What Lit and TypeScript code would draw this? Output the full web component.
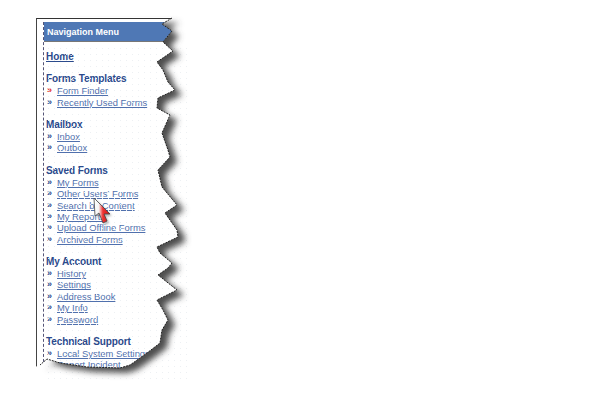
import { LitElement, html, css, svg } from "lit";
import { customElement } from "lit/decorators.js";

const EDGE = "M172 18 L162 24 L172 31 L163 42 L173 51 L157 62 L163 70 L168 82 L175 90 L158 98 L157 108 L170 115 L162 133 L168 150 L170 157 L158 170 L162 187 L177 205 L165 213 L177 230 L178 237 L157 247 L160 253 L172 263 L168 268 L158 275 L177 290 L157 300 L163 310 L168 320 L162 330 L160 343 L147 353 L140 358 L130 365 L120 368 L87 367 L60 363 L47 359 L40 365";
const INNER = EDGE + " L35 367 L35 17 L172 17 Z";
const SHADOW = EDGE + " L62 340 L62 18 Z";
const ARROW = "M94 198 L95 216 L99 213 L103 223 L107 221 L104 214 L110 214 Z";

const SECTIONS: { title: string; items: string[] }[] = [
  { title: "Forms Templates", items: ["Form Finder", "Recently Used Forms"] },
  { title: "Mailbox", items: ["Inbox", "Outbox"] },
  { title: "Saved Forms", items: ["My Forms", "Other Users' Forms", "Search by Content", "My Reports", "Upload Offline Forms", "Archived Forms"] },
  { title: "My Account", items: ["History", "Settings", "Address Book", "My Info", "Password"] },
  { title: "Technical Support", items: ["Local System Settings", "Report Incident"] },
];

@customElement("app-root")
export class AppRoot extends LitElement {
  static styles = css`
    :host { display: block; position: relative; width: 613px; height: 400px; overflow: hidden; background: #fff; font-family: "Liberation Sans", Arial, sans-serif; }
    .frame { margin: 18px 0 0 36px; width: 150px; height: 349px; box-sizing: border-box; border-left: 1px solid #444; border-top: 1px solid #333; padding: 3px 0 0 6px; }
    .menu { border-left: 1px dashed #557; height: 100%; width: 140px; }
    .head { background: #4f78b5; color: #fff; font-size: 9px; font-weight: 700; height: 20px; line-height: 20px; padding-left: 3px; border-bottom: 1px solid #777; box-sizing: border-box; white-space: nowrap; }
    .home { display: block; margin: 9px 0 0 2px; font-size: 10px; line-height: 12px; font-weight: 700; color: #2b4a8c; text-decoration: underline; }
    .sec { margin: 11px 0 0 2px; }
    .home + .sec { margin-top: 10px; }
    .sec h4 { margin: 0; font-size: 10px; line-height: 12px; font-weight: 700; color: #2b4a8c; letter-spacing: -.1px; }
    .row { display: flex; align-items: center; height: 11.4px; padding-left: 1px; font-size: 9.4px; white-space: nowrap; }
    .row i { width: 10px; font-style: normal; font-size: 9px; font-weight: 700; color: #2b4a8c; line-height: 11px; }
    .row i.red { color: #e02020; }
    .row a { color: #5070ad; text-decoration: underline; }
    .over { position: absolute; inset: 0; width: 613px; height: 400px; }
  `;

  render() {
    return html`
      <div class="frame"><div class="menu">
        <div class="head">Navigation Menu</div>
        <a class="home">Home</a>
        ${SECTIONS.map((s, si) => html`
          <div class="sec">
            <h4>${s.title}</h4>
            ${s.items.map((it, i) => html`<div class="row"><i class=${si === 0 && i === 0 ? "red" : ""}>»</i><a>${it}</a></div>`)}
          </div>`)}
      </div></div>
      <svg class="over" viewBox="0 0 613 400">
        ${svg`
        <defs>
          <filter id="b" x="-20%" y="-20%" width="140%" height="140%"><feGaussianBlur stdDeviation="3" /></filter>
          <filter id="c" x="-50%" y="-50%" width="200%" height="200%"><feGaussianBlur stdDeviation="1.2" /></filter>
          <clipPath id="outside"><path clip-rule="evenodd" d="M0 0H613V400H0Z ${INNER}" /></clipPath>
          <pattern id="dots" width="6" height="6" patternUnits="userSpaceOnUse"><rect width="1" height="1" fill="#edf0f3" /></pattern>
          <linearGradient id="g" x1="0" y1="0" x2="1" y2="0"><stop offset="0" stop-color="#fff"/><stop offset=".3" stop-color="#f4f4f4"/><stop offset=".55" stop-color="#e33"/><stop offset="1" stop-color="#c11"/></linearGradient>
        </defs>
        <path fill="#fff" fill-rule="evenodd" d="M0 0H613V400H0Z ${INNER}" />
        <rect x="44" y="44" width="145" height="335" fill="url(#dots)" />
        <g clip-path="url(#outside)"><path d=${SHADOW} fill="#4d4d4d" filter="url(#b)" transform="translate(7 5)" /></g>
        <path d=${EDGE} fill="none" stroke="#222" stroke-width="1" stroke-dasharray="2 1" />
        <path d=${ARROW} fill="#555" filter="url(#c)" opacity=".45" transform="translate(2 2)" />
        <path d=${ARROW} fill="url(#g)" stroke="#444" stroke-width=".8" />
        `}
      </svg>
    `;
  }
}
